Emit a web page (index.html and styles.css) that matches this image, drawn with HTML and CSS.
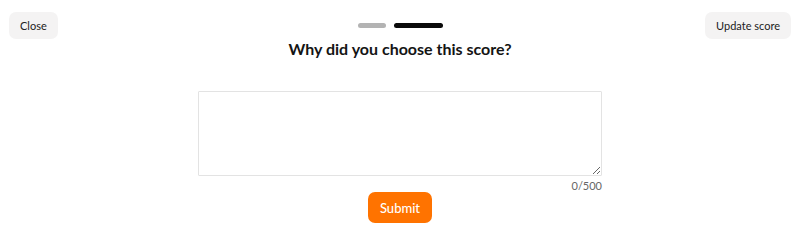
FILE: index.html
```html
<!DOCTYPE html>
<html lang="en">
<head>
<meta charset="utf-8">
<title>Feedback</title>
<link rel="stylesheet" href="styles.css">
</head>
<body>
<div class="page">
  <header class="top">
    <button class="ghost left">Close</button>
    <div class="center">
      <div class="steps">
        <span class="step done"></span>
        <span class="step active"></span>
      </div>
      <h1 class="title">Why did you choose this score?</h1>
    </div>
    <button class="ghost right">Update score</button>
  </header>
  <main class="form">
    <textarea class="answer" maxlength="500"></textarea>
    <div class="count">0/500</div>
    <button class="submit">Submit</button>
  </main>
</div>
</body>
</html>
```
FILE: styles.css
```css
* { box-sizing: border-box; }
html, body { margin: 0; padding: 0; background: #fff; }
body { font-family: Lato, "Noto Sans", sans-serif; color: #1a1a1a; }
.page { width: 800px; height: 247px; }
.top {
  display: grid;
  grid-template-columns: 1fr auto 1fr;
  align-items: start;
  padding: 12px 9px 0 9px;
}
.ghost {
  font-family: Lato, sans-serif;
  font-size: 11px;
  color: #222;
  background: #f4f3f3;
  border: none;
  border-radius: 7px;
  height: 27px;
  padding: 0 11px;
  cursor: pointer;
}
.ghost.left { justify-self: start; }
.ghost.right { justify-self: end; }
.center {
  display: flex;
  flex-direction: column;
  align-items: center;
  padding-top: 11px;
}
.steps { display: flex; gap: 8px; }
.step { display: block; height: 5px; border-radius: 3px; }
.step.done { width: 28px; background: #b3b3b3; }
.step.active { width: 49px; background: #0a0a0a; }
.title {
  margin: 10px 0 0 0;
  font-size: 16px;
  font-weight: 700;
  line-height: 22px;
  color: #141414;
}
.form {
  display: flex;
  flex-direction: column;
  align-items: center;
  margin-top: 31px;
}
.answer {
  width: 404px;
  height: 85px;
  border: 1px solid #e3e3e3;
  border-radius: 1px;
  resize: vertical;
  font-family: Lato, sans-serif;
  display: block;
}
.count {
  width: 404px;
  text-align: right;
  font-size: 11px;
  color: #666;
  margin-top: 4px;
  line-height: 12px;
}
.submit {
  margin-top: 0;
  width: 64px;
  height: 31px;
  background: #ff7300;
  color: #fff;
  border: none;
  border-radius: 7px;
  font-family: Lato, sans-serif;
  font-size: 13px;
  font-weight: 500;
}
```
